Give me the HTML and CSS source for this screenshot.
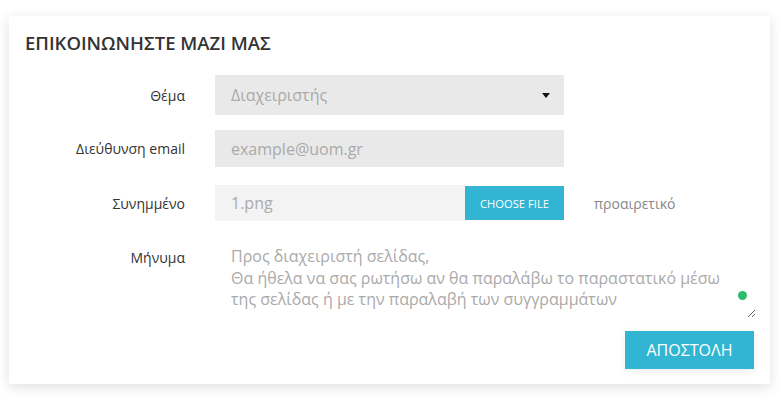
FILE: index.html
```html
<!DOCTYPE html>
<html lang="el">
<head>
<meta charset="utf-8">
<title>Επικοινωνήστε μαζί μας</title>
<link rel="stylesheet" href="styles.css">
</head>
<body>
<div class="card">
  <h2 class="title">ΕΠΙΚΟΙΝΩΝΗΣΤΕ ΜΑΖΙ ΜΑΣ</h2>
  <form class="form">
    <div class="row row-select">
      <label class="label">Θέμα</label>
      <div class="field select">
        <span class="value">Διαχειριστής</span>
        <span class="caret"></span>
      </div>
    </div>
    <div class="row row-email">
      <label class="label">Διεύθυνση email</label>
      <div class="field email"><span class="value">example@uom.gr</span></div>
    </div>
    <div class="row row-file">
      <label class="label">Συνημμένο</label>
      <div class="file">
        <div class="file-name"><span class="value">1.png</span></div>
        <button type="button" class="file-btn">CHOOSE FILE</button>
      </div>
      <span class="hint">προαιρετικό</span>
    </div>
    <div class="row row-message">
      <label class="label label-top">Μήνυμα</label>
      <div class="message">
        <textarea class="textarea">Προς διαχειριστή σελίδας,
Θα ήθελα να σας ρωτήσω αν θα παραλάβω το παραστατικό μέσω
της σελίδας ή με την παραλαβή των συγγραμμάτων</textarea>
        <span class="dot"></span>
      </div>
    </div>
    <div class="actions">
      <button type="button" class="submit">ΑΠΟΣΤΟΛΗ</button>
    </div>
  </form>
</div>
</body>
</html>
```
FILE: styles.css
```css
* { box-sizing: border-box; }
html, body {
  margin: 0;
  background: #fff;
  font-family: "Open Sans", "Noto Sans", sans-serif;
  color: #333;
}
body {
  padding: 16px 0 20px 9px;
}
.card {
  width: 761px;
  padding: 15px 14px 15px 16px;
  background: #fff;
  box-shadow: 0 3px 12px rgba(0, 0, 0, 0.13);
}
.title {
  margin: 0;
  font-size: 18.5px;
  line-height: 24px;
  font-weight: 600;
  color: #333;
}
.form {
  display: flex;
  flex-direction: column;
  margin: 20px 0 0;
}
.row {
  display: grid;
  grid-template-columns: 160px 349px auto;
  column-gap: 30px;
  align-items: center;
}
.row-email { margin-top: 15px; }
.row-file { margin-top: 18px; }
.row-message {
  margin-top: 19px;
  align-items: start;
}
.label {
  text-align: right;
  font-size: 14px;
  color: #333;
}
.label-top { padding-top: 8px; }
.field {
  display: flex;
  align-items: center;
  padding: 0 16px;
  background: #e9e9e9;
}
.value {
  font-size: 16px;
  color: #aaa;
}
.select { height: 40px; justify-content: space-between; padding-right: 14px; }
.caret {
  width: 0;
  height: 0;
  border-left: 4px solid transparent;
  border-right: 4px solid transparent;
  border-top: 5px solid #111;
}
.email { height: 37px; }
.file {
  display: flex;
  align-items: center;
  height: 36px;
}
.file-name {
  flex: 1;
  height: 36px;
  display: flex;
  align-items: center;
  padding: 0 16px;
  background: #f3f3f3;
}
.file-btn {
  width: 99px;
  height: 34px;
  border: 0;
  margin: 0;
  padding: 0;
  background: #31b5d3;
  color: #fff;
  font-family: "Open Sans", sans-serif;
  font-size: 11.2px;
}
.hint {
  font-size: 14px;
  color: #888;
}
.message {
  grid-column: 2 / 4;
  position: relative;
}
.textarea {
  display: block;
  width: 100%;
  height: 78px;
  border: 0;
  outline: none;
  padding: 6px 16px 0;
  margin: 0;
  background: #fff;
  font-family: "Open Sans", sans-serif;
  font-size: 16px;
  line-height: 21.7px;
  color: #aaa;
  resize: vertical;
  overflow: hidden;
}
.dot {
  position: absolute;
  right: 9px;
  top: 51px;
  width: 9px;
  height: 9px;
  border-radius: 50%;
  background: #2dbb6e;
}
.actions {
  display: flex;
  justify-content: flex-end;
  margin-top: 13px;
  padding-right: 2px;
}
.submit {
  width: 129px;
  height: 38px;
  border: 0;
  background: #31b5d3;
  color: #fff;
  font-family: "Open Sans", sans-serif;
  font-size: 16px;
  box-shadow: 0 2px 8px rgba(0, 0, 0, 0.08);
}
```
